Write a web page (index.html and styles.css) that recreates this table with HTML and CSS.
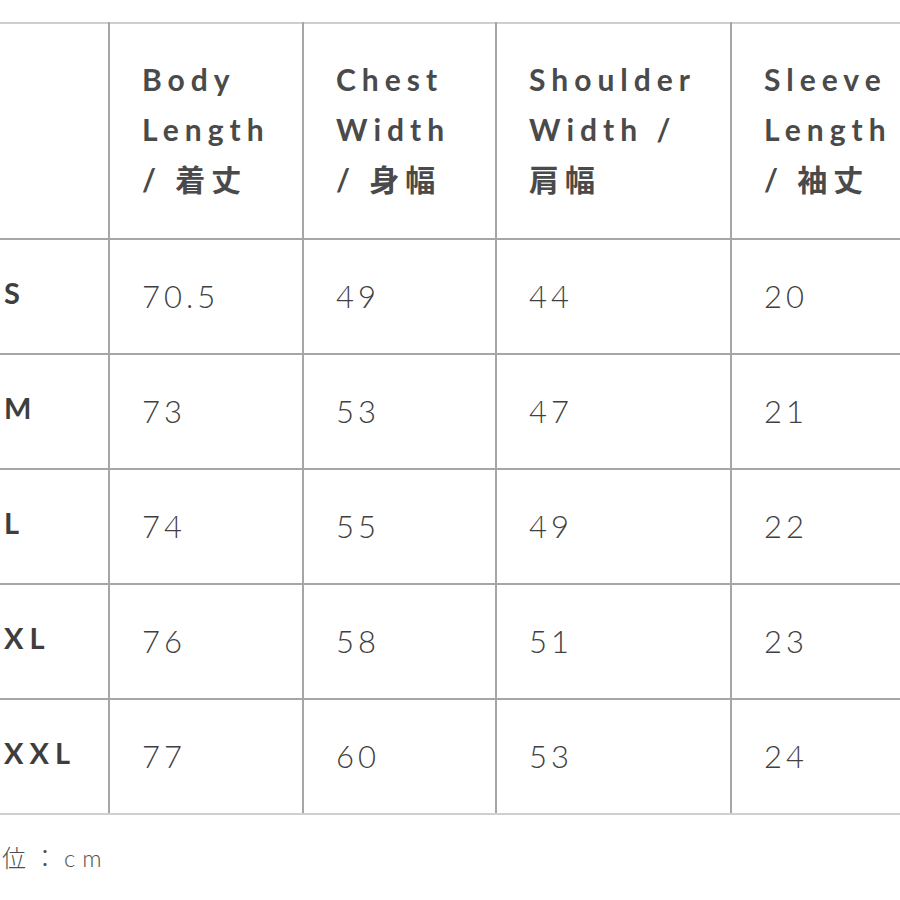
FILE: index.html
```html
<!DOCTYPE html>
<html lang="ja">
<head>
<meta charset="utf-8">
<link rel="stylesheet" href="styles.css">
</head>
<body>
<div class="page">
  <table class="chart">
    <colgroup>
      <col class="c0"><col class="c1"><col class="c2"><col class="c3"><col class="c4">
    </colgroup>
    <thead>
      <tr>
        <th class="corner"></th>
        <th>Body<br>Length<br>/ 着丈</th>
        <th>Chest<br>Width<br>/ 身幅</th>
        <th>Shoulder<br>Width /<br>肩幅</th>
        <th>Sleeve<br>Length<br>/ 袖丈</th>
      </tr>
    </thead>
    <tbody>
      <tr><td class="size">S</td><td>70.5</td><td>49</td><td>44</td><td>20</td></tr>
      <tr><td class="size">M</td><td>73</td><td>53</td><td>47</td><td>21</td></tr>
      <tr><td class="size">L</td><td>74</td><td>55</td><td>49</td><td>22</td></tr>
      <tr><td class="size">XL</td><td>76</td><td>58</td><td>51</td><td>23</td></tr>
      <tr><td class="size">XXL</td><td>77</td><td>60</td><td>53</td><td>24</td></tr>
    </tbody>
  </table>
  <p class="unit">位：cm</p>
</div>
</body>
</html>
```
FILE: styles.css
```css
html, body {
  margin: 0;
  padding: 0;
  background: #ffffff;
  overflow: hidden;
}
.page {
  width: 900px;
  height: 900px;
  overflow: hidden;
  padding-top: 22px;
  box-sizing: border-box;
}
.chart {
  border-collapse: collapse;
  table-layout: fixed;
  width: 1010px;
  color: #464646;
}
.c0 { width: 109px; }
.c1 { width: 194px; }
.c2 { width: 193px; }
.c3 { width: 235px; }
.c4 { width: 279px; }
.chart th, .chart td {
  border: 2px solid #a6a6a6;
  text-align: left;
  vertical-align: middle;
  padding: 0 0 0 32px;
}
.chart thead tr { height: 216px; }
.chart thead th {
  border-top-color: #cfcfcf;
  font-family: "Lato", "Noto Sans CJK JP", sans-serif;
  font-weight: 700;
  font-size: 30px;
  line-height: 50px;
  letter-spacing: 6px;
  color: #4a4a4a;
  padding-bottom: 4px;
}
.chart tbody tr { height: 115px; }
.chart td {
  font-family: "Lato", "Noto Sans CJK JP", sans-serif;
  font-weight: 300;
  font-size: 31px;
  letter-spacing: 4px;
  color: #404040;
  padding-bottom: 2px;
}
.chart tbody tr:last-child td { border-bottom-color: #cfcfcf; }
.chart th:first-child, .chart td:first-child {
  border-left: none;
  padding-left: 4px;
}
.chart td.size {
  font-weight: 700;
  font-size: 29px;
  letter-spacing: 6px;
  color: #3e3e3e;
  padding-bottom: 8px;
}
.unit {
  margin: 24px 0 0 2px;
  font-family: "Lato", "Noto Sans CJK JP", sans-serif;
  font-weight: 300;
  font-size: 24px;
  letter-spacing: 7px;
  color: #505050;
}
```
